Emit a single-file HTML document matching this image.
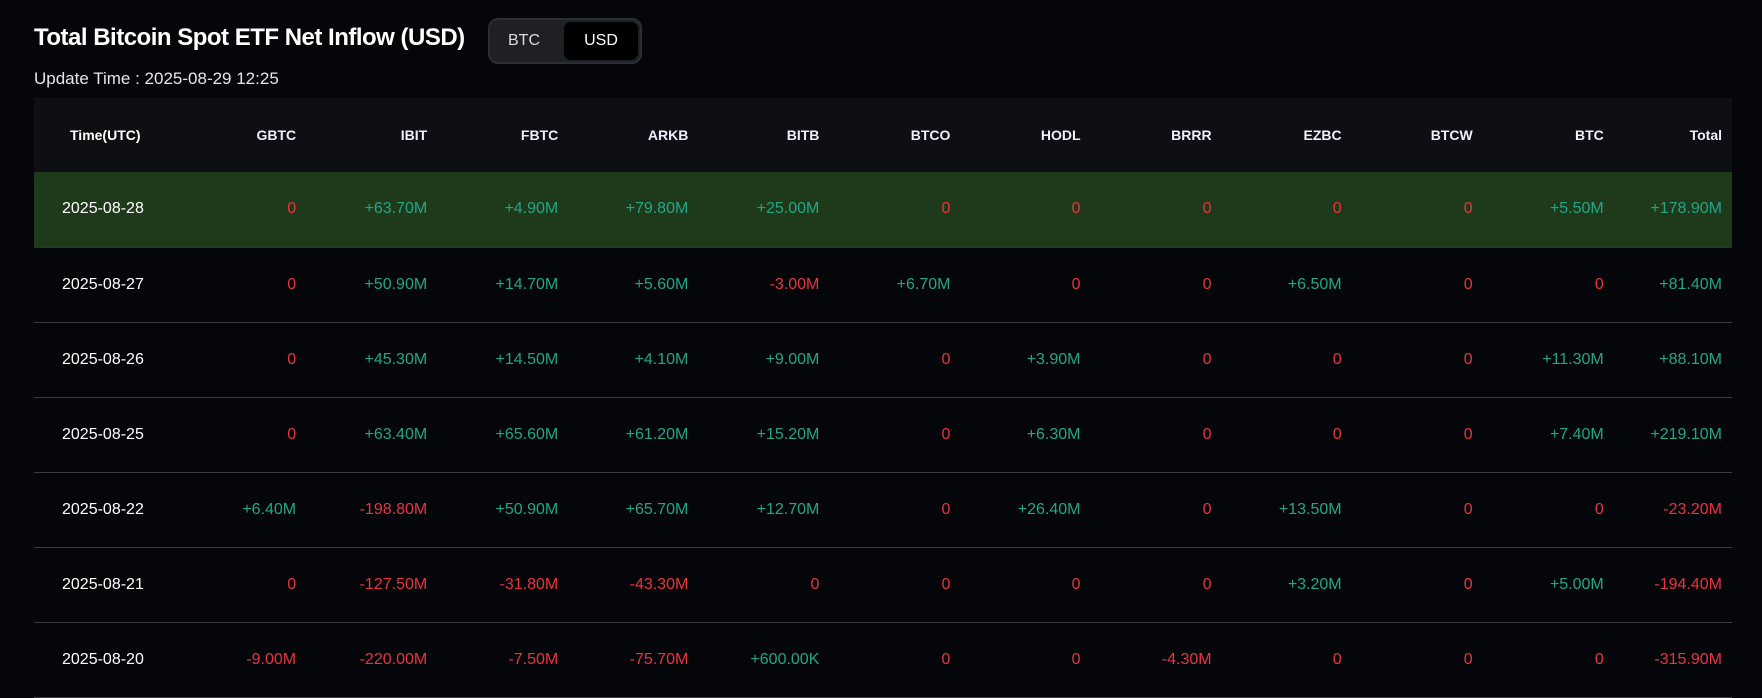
<!DOCTYPE html>
<html><head><meta charset="utf-8"><style>
*{margin:0;padding:0;box-sizing:border-box}
body{width:1762px;height:682px;overflow:hidden;background:#05060a;font-family:"Liberation Sans",sans-serif;color:#fff;position:relative}
.title{position:absolute;left:34px;top:24px;font-size:24px;font-weight:bold;white-space:nowrap;letter-spacing:-0.5px}
.tog{position:absolute;left:488px;top:18px;width:154px;height:46px;border:2px solid #2b2e35;background:#1e2026;border-radius:10px}
.tog .b{position:absolute;left:18px;top:12px;font-size:16px;color:#d8dce2}
.tog .u{position:absolute;left:74px;top:2px;width:74px;height:38px;background:#000;border-radius:7px;font-size:16px;color:#fff;text-align:center;line-height:38px}
.upd{position:absolute;left:34px;top:69px;font-size:17px;color:#e6e6e6}
table{position:absolute;left:34px;top:98px;width:1698px;border-collapse:collapse;table-layout:fixed}
th{height:74px;background:#0e0f13;font-size:14px;font-weight:bold;text-align:right;color:#eef}
td{height:75px;font-size:16px;text-align:right;border-bottom:1px solid #3a3c42;white-space:nowrap}
th:first-child,td:first-child{text-align:left;padding-left:36px;color:#fff}
td:first-child{padding-left:28px}
th:last-child,td:last-child{padding-right:10px}
tr.hl td{background:#1e3a1a;border-bottom:1px solid #2a3a2a}
.g{color:#25a586}.r{color:#e8343f}
</style></head><body>
<div class="title">Total Bitcoin Spot ETF Net Inflow (USD)</div>
<div class="tog"><span class="b">BTC</span><span class="u">USD</span></div>
<div class="upd">Update Time : 2025-08-29 12:25</div>
<table>
<colgroup><col style="width:131px"><col style="width:131px"><col style="width:131px"><col style="width:131px"><col style="width:130px"><col style="width:131px"><col style="width:131px"><col style="width:130px"><col style="width:131px"><col style="width:130px"><col style="width:131px"><col style="width:131px"><col style="width:128px"></colgroup>
<tr><th>Time(UTC)</th><th>GBTC</th><th>IBIT</th><th>FBTC</th><th>ARKB</th><th>BITB</th><th>BTCO</th><th>HODL</th><th>BRRR</th><th>EZBC</th><th>BTCW</th><th>BTC</th><th>Total</th></tr>
<tr class="hl"><td>2025-08-28</td><td class="r">0</td><td class="g">+63.70M</td><td class="g">+4.90M</td><td class="g">+79.80M</td><td class="g">+25.00M</td><td class="r">0</td><td class="r">0</td><td class="r">0</td><td class="r">0</td><td class="r">0</td><td class="g">+5.50M</td><td class="g">+178.90M</td></tr>
<tr><td>2025-08-27</td><td class="r">0</td><td class="g">+50.90M</td><td class="g">+14.70M</td><td class="g">+5.60M</td><td class="r">-3.00M</td><td class="g">+6.70M</td><td class="r">0</td><td class="r">0</td><td class="g">+6.50M</td><td class="r">0</td><td class="r">0</td><td class="g">+81.40M</td></tr>
<tr><td>2025-08-26</td><td class="r">0</td><td class="g">+45.30M</td><td class="g">+14.50M</td><td class="g">+4.10M</td><td class="g">+9.00M</td><td class="r">0</td><td class="g">+3.90M</td><td class="r">0</td><td class="r">0</td><td class="r">0</td><td class="g">+11.30M</td><td class="g">+88.10M</td></tr>
<tr><td>2025-08-25</td><td class="r">0</td><td class="g">+63.40M</td><td class="g">+65.60M</td><td class="g">+61.20M</td><td class="g">+15.20M</td><td class="r">0</td><td class="g">+6.30M</td><td class="r">0</td><td class="r">0</td><td class="r">0</td><td class="g">+7.40M</td><td class="g">+219.10M</td></tr>
<tr><td>2025-08-22</td><td class="g">+6.40M</td><td class="r">-198.80M</td><td class="g">+50.90M</td><td class="g">+65.70M</td><td class="g">+12.70M</td><td class="r">0</td><td class="g">+26.40M</td><td class="r">0</td><td class="g">+13.50M</td><td class="r">0</td><td class="r">0</td><td class="r">-23.20M</td></tr>
<tr><td>2025-08-21</td><td class="r">0</td><td class="r">-127.50M</td><td class="r">-31.80M</td><td class="r">-43.30M</td><td class="r">0</td><td class="r">0</td><td class="r">0</td><td class="r">0</td><td class="g">+3.20M</td><td class="r">0</td><td class="g">+5.00M</td><td class="r">-194.40M</td></tr>
<tr><td>2025-08-20</td><td class="r">-9.00M</td><td class="r">-220.00M</td><td class="r">-7.50M</td><td class="r">-75.70M</td><td class="g">+600.00K</td><td class="r">0</td><td class="r">0</td><td class="r">-4.30M</td><td class="r">0</td><td class="r">0</td><td class="r">0</td><td class="r">-315.90M</td></tr>
</table>
</body></html>
